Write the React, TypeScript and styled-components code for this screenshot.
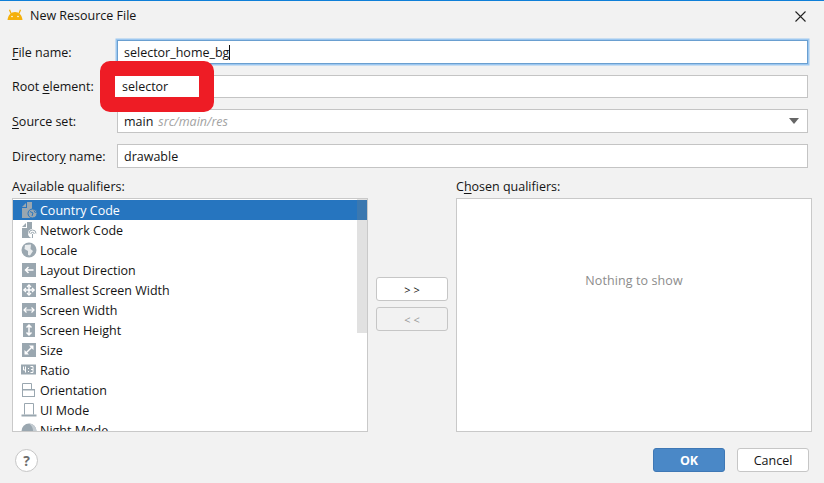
import React from 'react';
import styled, { createGlobalStyle } from 'styled-components';

const GlobalStyle = createGlobalStyle`
  html, body {
    margin: 0;
    padding: 0;
    background: #f2f2f2;
  }
  body {
    font-family: "Open Sans", "Noto Sans", sans-serif;
    font-size: 12.5px;
    color: #141414;
  }
`;

const SWindow = styled.div`
  width: 824px;
  height: 483px;
  box-sizing: border-box;
  border-top: 1px solid #0f7fd8;
  background: #f2f2f2;
  display: flex;
  flex-direction: column;
  overflow: hidden;
`;

const STitleBar = styled.div`
  height: 30px;
  display: flex;
  align-items: center;
  gap: 7px;
  padding: 0 18px 0 7px;
`;

const STitle = styled.div`
  flex: 1;
  line-height: 30px;
`;

const SLogo = styled.svg`
  margin-bottom: 2px;
`;

const SForm = styled.div`
  display: grid;
  grid-template-columns: 105px 691px;
  row-gap: 11px;
  padding: 9px 0 0 12px;
`;

const SLabel = styled.div`
  display: flex;
  align-items: center;
  white-space: pre;
`;

const SKey = styled.span`
  text-decoration: underline;
  text-underline-offset: 2px;
`;

const SFieldHolder = styled.div`
  position: relative;
`;

interface FieldProps {
  focused?: boolean;
  short?: boolean;
}

const SField = styled.div<FieldProps>`
  box-sizing: border-box;
  height: ${(props) => (props.short ? '23px' : '24px')};
  background: #fff;
  border: 1px solid ${(props) => (props.focused ? '#6a9fd0' : '#c4c4c4')};
  box-shadow: ${(props) => (props.focused ? '0 0 0 1.5px #9cc7f0' : 'none')};
  display: flex;
  align-items: center;
  padding: 0 5px 0 6px;
`;

const SCaret = styled.span`
  display: inline-block;
  width: 1px;
  height: 15px;
  background: #111;
`;

const SHint = styled.span`
  margin-left: 5px;
  color: #a3a3a3;
  font-style: italic;
  flex: 1;
`;

const SArrow = styled.span`
  width: 0;
  height: 0;
  margin-right: 3px;
  border-left: 5px solid transparent;
  border-right: 5px solid transparent;
  border-top: 6px solid #666;
`;

/* red marker someone painted over the screenshot */
const SMarker = styled.div`
  position: absolute;
  left: -17px;
  top: -14px;
  box-sizing: border-box;
  width: 114px;
  height: 51px;
  border: 15px solid #ee1c25;
  border-radius: 10px;
  background: #fff;
  background-clip: padding-box;
  display: flex;
  align-items: center;
  padding-left: 7px;
`;

const SPanels = styled.div`
  display: grid;
  grid-template-columns: 356px 88px 356px;
  padding: 9px 0 0 12px;
`;

const SColumn = styled.div`
  display: flex;
  flex-direction: column;
`;

const SColumnTitle = styled.div`
  height: 21px;
  line-height: 20px;
`;

const SListBox = styled.div`
  position: relative;
  box-sizing: border-box;
  height: 234px;
  background: #fff;
  border: 1px solid #c9c9c9;
  padding-top: 1px;
  overflow: hidden;
`;

interface RowProps {
  selected?: boolean;
}

const SRow = styled.div<RowProps>`
  height: 20px;
  display: flex;
  align-items: center;
  gap: 3px;
  padding-left: 8px;
  background: ${(props) => (props.selected ? '#2675bf' : 'transparent')};
  color: ${(props) => (props.selected ? '#fff' : '#141414')};
`;

const SScrollThumb = styled.div`
  position: absolute;
  right: 0;
  top: 0;
  width: 10px;
  height: 134px;
  background: rgba(130, 130, 130, 0.24);
`;

const SMoveButtons = styled.div`
  display: flex;
  flex-direction: column;
  gap: 6px;
  padding: 100px 8px 0;
`;

interface ButtonProps {
  disabled?: boolean;
}

const SMoveButton = styled.div<ButtonProps>`
  box-sizing: border-box;
  width: 72px;
  height: 24px;
  border-radius: 3px;
  border: 1px solid #c6c6c6;
  background: ${(props) => (props.disabled ? '#f2f2f2' : '#fff')};
  color: ${(props) => (props.disabled ? '#9a9a9a' : '#141414')};
  font-size: 11px;
  display: flex;
  align-items: center;
  justify-content: center;
`;

const SEmptyBox = styled.div`
  box-sizing: border-box;
  height: 234px;
  background: #fff;
  border: 1px solid #c9c9c9;
  padding-bottom: 70px;
  display: flex;
  align-items: center;
  justify-content: center;
  color: #8c8c8c;
  letter-spacing: 0.1px;
`;

const SFooter = styled.div`
  display: flex;
  align-items: center;
  padding: 16px 15px 0 15px;
`;

const SHelp = styled.div`
  box-sizing: border-box;
  width: 23px;
  height: 23px;
  border-radius: 50%;
  border: 1px solid #c6c6c6;
  background: #fff;
  color: #6e6e6e;
  font-weight: 700;
  font-size: 14px;
  display: flex;
  align-items: center;
  justify-content: center;
  margin-right: auto;
`;

interface DialogButtonProps {
  primary?: boolean;
}

const SDialogButton = styled.div<DialogButtonProps>`
  box-sizing: border-box;
  width: 72px;
  height: 24px;
  margin-left: 12px;
  border-radius: 3px;
  border: 1px solid ${(props) => (props.primary ? '#3f78b5' : '#c6c6c6')};
  background: ${(props) => (props.primary ? '#4a88c7' : '#fff')};
  color: ${(props) => (props.primary ? '#fff' : '#141414')};
  font-weight: ${(props) => (props.primary ? 700 : 400)};
  display: flex;
  align-items: center;
  justify-content: center;
`;

const SFooterEnd = styled.div`
  display: flex;
`;

const AndroidLogo: React.FC = () => (
  <SLogo width="16" height="12" viewBox="0 0 16 12">
    <path d="M0.500 11 C1 6 4 3 8 3 C12 3 15 6 15.500 11 Z" fill="#f5b00a" />
    <path d="M4 4.500 L2.500 0.800 M12 4.500 L13.500 0.800" stroke="#f5b00a" strokeWidth="1.3" />
    <circle cx="5" cy="7.500" r="0.8" fill="#fff" />
    <circle cx="11" cy="7.500" r="0.8" fill="#fff" />
  </SLogo>
);

const CloseIcon: React.FC = () => (
  <svg width="11" height="11" viewBox="0 0 11 11">
    <path d="M0.500 0.500 L10.500 10.500 M10.500 0.500 L0.500 10.500" stroke="#222" strokeWidth="1.1" />
  </svg>
);

const GRAY = '#9aa7b0';

type IconKind =
  | 'country'
  | 'network'
  | 'locale'
  | 'direction'
  | 'smallest'
  | 'width'
  | 'height'
  | 'size'
  | 'ratio'
  | 'orientation'
  | 'ui'
  | 'night';

const QualifierIcon: React.FC<{ kind: IconKind; selected?: boolean }> = ({ kind, selected }) => {
  const white = { stroke: '#fff', strokeWidth: 1.5, fill: 'none' };
  const ring = selected ? '#2675bf' : '#fff';
  return (
    <svg width="16" height="16" viewBox="0 0 16 16">
      {kind === 'country' && (
        <>
          <path d="M1 6 L6 6 L6 0 L11 0 L11 16 L1 16 Z" fill={GRAY} />
          <path d="M1 5 L5 5 L5 1 Z" fill={GRAY} />
          <circle cx="11.500" cy="11.500" r="4.500" fill={GRAY} stroke={ring} />
          <path d="M9 9.500 L12 11 L11 14 M13 8.500 L14.500 11" stroke={ring} fill="none" />
        </>
      )}
      {kind === 'network' && (
        <>
          <path d="M1 6 L6 6 L6 0 L11 0 L11 16 L1 16 Z" fill={GRAY} />
          <path d="M1 5 L5 5 L5 1 Z" fill={GRAY} />
          <circle cx="11.500" cy="11.500" r="4.500" fill="#fff" />
          <path d="M8 11.500 A3.500 3.500 0 0 1 15 11.500 M9.800 12 A1.700 1.700 0 0 1 13.200 12 M11.500 12 L11.500 16" stroke={GRAY} fill="none" />
        </>
      )}
      {kind === 'locale' && (
        <>
          <circle cx="8" cy="8" r="7.500" fill={GRAY} />
          <path d="M4 3 L10 2.500 L9.500 7 L12 9 L9 13.500 L7 13 L7 9 L3.500 7 Z" fill="#e9ecee" />
        </>
      )}
      {kind === 'direction' && (
        <>
          <rect x="1" y="1" width="14" height="14" fill={GRAY} />
          <path d="M12.500 8 L4.500 8 M7.500 5 L4.500 8 L7.500 11" {...white} />
        </>
      )}
      {kind === 'smallest' && (
        <>
          <rect x="1" y="1" width="14" height="14" fill={GRAY} />
          <path d="M8 3 L8 13 M3 8 L13 8" {...white} />
          <path d="M6 5 L8 2.800 L10 5 M6 11 L8 13.200 L10 11 M5 6 L2.800 8 L5 10 M11 6 L13.200 8 L11 10" {...white} strokeWidth={1.2} />
        </>
      )}
      {kind === 'width' && (
        <>
          <rect x="1" y="1" width="14" height="14" fill={GRAY} />
          <path d="M3 8 L13 8 M5.500 5.500 L3 8 L5.500 10.500 M10.500 5.500 L13 8 L10.500 10.500" {...white} strokeWidth={1.2} />
        </>
      )}
      {kind === 'height' && (
        <>
          <rect x="2" y="1" width="12" height="14" fill={GRAY} />
          <path d="M8 3 L8 13 M5.500 5.500 L8 3 L10.500 5.500 M5.500 10.500 L8 13 L10.500 10.500" {...white} />
        </>
      )}
      {kind === 'size' && (
        <>
          <rect x="1" y="1" width="14" height="14" fill={GRAY} />
          <path d="M4.500 11.500 L11.500 4.500" {...white} />
          <path d="M8 3.500 L12.500 3.500 L12.500 8 Z M3.500 8 L3.500 12.500 L8 12.500 Z" fill="#fff" />
        </>
      )}
      {kind === 'ratio' && (
        <>
          <rect x="0" y="2.500" width="15" height="10" fill={GRAY} />
          <path d="M2.500 4.500 L2.500 8 L5 8 M4.500 4.500 L4.500 10.500 M7.500 6 L7.500 7 M7.500 9 L7.500 10 M9.500 4.500 L12 4.500 L12 10.500 L9.500 10.500 M10 7.500 L12 7.500" {...white} strokeWidth={1} />
        </>
      )}
      {kind === 'orientation' && (
        <>
          <path d="M1.500 7 L1.500 1.500 L10.500 1.500 L10.500 7" fill="none" stroke={GRAY} />
          <rect x="1.500" y="7.500" width="12" height="7" fill="none" stroke={GRAY} />
          <rect x="1" y="7" width="13" height="1.500" fill={GRAY} />
        </>
      )}
      {kind === 'ui' && (
        <>
          <path d="M3.500 12.500 L3.500 1.500 L12.500 1.500 L12.500 12.500" fill="none" stroke={GRAY} />
          <rect x="0.500" y="12.500" width="15" height="2" fill={GRAY} />
        </>
      )}
      {kind === 'night' && (
        <>
          <circle cx="8" cy="9" r="7.500" fill={GRAY} />
          <path d="M8 1.500 A7.500 7.500 0 0 1 8 16.500 A9 9 0 0 0 8 1.500 Z" fill="#c4ccd2" />
        </>
      )}
    </svg>
  );
};

const qualifiers: { name: string; icon: IconKind }[] = [
  { name: 'Country Code', icon: 'country' },
  { name: 'Network Code', icon: 'network' },
  { name: 'Locale', icon: 'locale' },
  { name: 'Layout Direction', icon: 'direction' },
  { name: 'Smallest Screen Width', icon: 'smallest' },
  { name: 'Screen Width', icon: 'width' },
  { name: 'Screen Height', icon: 'height' },
  { name: 'Size', icon: 'size' },
  { name: 'Ratio', icon: 'ratio' },
  { name: 'Orientation', icon: 'orientation' },
  { name: 'UI Mode', icon: 'ui' },
  { name: 'Night Mode', icon: 'night' },
];

const App: React.FC = () => {
  return (
    <SWindow>
      <GlobalStyle />
      <STitleBar>
        <AndroidLogo />
        <STitle>New Resource File</STitle>
        <CloseIcon />
      </STitleBar>
      <SForm>
        <SLabel>
          <SKey>F</SKey>ile name:
        </SLabel>
        <SField focused>
          selector_home_bg
          <SCaret />
        </SField>
        <SLabel>
          Root <SKey>e</SKey>lement:
        </SLabel>
        <SFieldHolder>
          <SField short />
          <SMarker>selector</SMarker>
        </SFieldHolder>
        <SLabel>
          <SKey>S</SKey>ource set:
        </SLabel>
        <SField>
          main
          <SHint>src/main/res</SHint>
          <SArrow />
        </SField>
        <SLabel>
          Director<SKey>y</SKey> name:
        </SLabel>
        <SField>drawable</SField>
      </SForm>
      <SPanels>
        <SColumn>
          <SColumnTitle>
            A<SKey>v</SKey>ailable qualifiers:
          </SColumnTitle>
          <SListBox>
            {qualifiers.map((q, i) => (
              <SRow key={q.name} selected={i === 0}>
                <QualifierIcon kind={q.icon} selected={i === 0} />
                {q.name}
              </SRow>
            ))}
            <SScrollThumb />
          </SListBox>
        </SColumn>
        <SMoveButtons>
          <SMoveButton>&gt; &gt;</SMoveButton>
          <SMoveButton disabled>&lt; &lt;</SMoveButton>
        </SMoveButtons>
        <SColumn>
          <SColumnTitle>
            C<SKey>h</SKey>osen qualifiers:
          </SColumnTitle>
          <SEmptyBox>Nothing to show</SEmptyBox>
        </SColumn>
      </SPanels>
      <SFooter>
        <SHelp>?</SHelp>
        <SFooterEnd>
          <SDialogButton primary>OK</SDialogButton>
          <SDialogButton>Cancel</SDialogButton>
        </SFooterEnd>
      </SFooter>
    </SWindow>
  );
};

export default App;
